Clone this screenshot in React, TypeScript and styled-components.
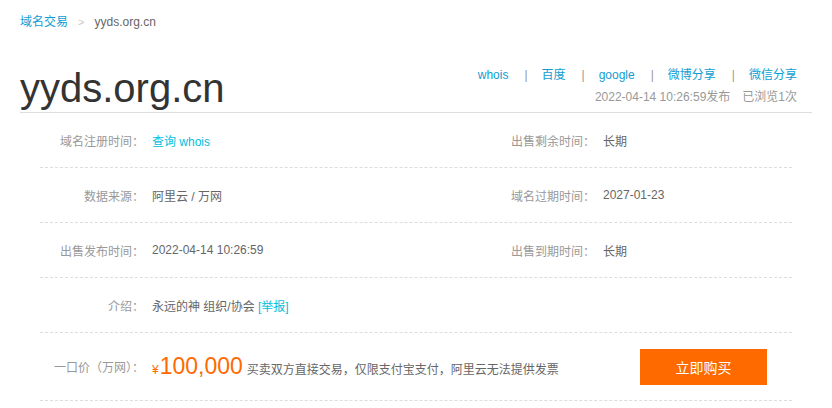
import React from "react";
import styled, { createGlobalStyle } from "styled-components";

const GlobalStyle = createGlobalStyle`
  body {
    margin: 0;
    background: #fff;
    font-family: "Liberation Sans", "Noto Sans CJK SC", sans-serif;
    font-size: 12px;
    color: #666;
  }
`;

const Page = styled.div`
  width: 792px;
  padding: 0 20px;
`;

const Breadcrumb = styled.div`
  display: flex;
  align-items: center;
  height: 16px;
  margin-top: 14px;
  gap: 8px;
  line-height: 16px;
`;

const CrumbLink = styled.a`
  color: #109dd2;
  text-decoration: none;
`;

const CrumbSep = styled.span`
  color: #c8c8c8;
  font-size: 11px;
  padding: 0 2px;
`;

const CrumbCurrent = styled.span`
  color: #666;
`;

const Header = styled.div`
  display: flex;
  justify-content: space-between;
  align-items: flex-end;
  height: 82px;
  border-bottom: 1px solid #ddd;
`;

const Title = styled.h1`
  margin: 0 0 1px;
  font-weight: normal;
  font-size: 40px;
  line-height: 46px;
  color: #333;
`;

const Meta = styled.div`
  display: flex;
  flex-direction: column;
  align-items: flex-end;
  margin-right: 15px;
  padding-bottom: 7px;
  gap: 6px;
`;

const Links = styled.div`
  display: flex;
  align-items: center;
  line-height: 16px;
`;

const ShareLink = styled.a`
  color: #109dd2;
  text-decoration: none;
`;

const Pipe = styled.span`
  color: #999;
  padding: 0 14px 0 16px;
`;

const Stamp = styled.div`
  display: flex;
  gap: 12px;
  color: #999;
  line-height: 16px;
`;

const Table = styled.div`
  margin: 0 20px;
`;

const Row = styled.div<{ $tall?: boolean }>`
  display: flex;
  align-items: center;
  height: ${(p) => (p.$tall ? 67 : 54)}px;
  border-bottom: 1px dashed #ddd;
`;

const Cell = styled.div<{ $w: number }>`
  display: flex;
  align-items: center;
  width: ${(p) => p.$w}px;
  flex-shrink: 0;
`;

const Label = styled.span`
  width: 104px;
  flex-shrink: 0;
  text-align: right;
  color: #999;
`;

const Value = styled.span`
  margin-left: 8px;
  color: #666;
`;

const Accent = styled.a`
  color: #00c1de;
  text-decoration: none;
`;

const PriceValue = styled.div`
  display: flex;
  align-items: baseline;
  margin-left: 8px;
  flex: 1;
`;

const Yen = styled.span`
  color: #ff6a00;
  font-size: 12px;
  margin-right: 1px;
`;

const Amount = styled.span`
  color: #ff6a00;
  font-size: 23px;
  margin-right: 4px;
`;

const Note = styled.span`
  color: #666;
`;

const BuyButton = styled.button`
  width: 127px;
  height: 36px;
  margin-right: 25px;
  border: 0;
  background: #ff6a00;
  color: #fff;
  font-family: inherit;
  font-size: 14px;
  cursor: pointer;
`;

export default function App() {
  return (
    <>
      <GlobalStyle />
      <Page>
        <Breadcrumb>
          <CrumbLink href="#">域名交易</CrumbLink>
          <CrumbSep>&gt;</CrumbSep>
          <CrumbCurrent>yyds.org.cn</CrumbCurrent>
        </Breadcrumb>

        <Header>
          <Title>yyds.org.cn</Title>
          <Meta>
            <Links>
              <ShareLink href="#">whois</ShareLink>
              <Pipe>|</Pipe>
              <ShareLink href="#">百度</ShareLink>
              <Pipe>|</Pipe>
              <ShareLink href="#">google</ShareLink>
              <Pipe>|</Pipe>
              <ShareLink href="#">微博分享</ShareLink>
              <Pipe>|</Pipe>
              <ShareLink href="#">微信分享</ShareLink>
            </Links>
            <Stamp>
              <span>2022-04-14 10:26:59发布</span>
              <span>已浏览1次</span>
            </Stamp>
          </Meta>
        </Header>

        <Table>
          <Row>
            <Cell $w={451}>
              <Label>域名注册时间：</Label>
              <Value>
                <Accent href="#">查询 whois</Accent>
              </Value>
            </Cell>
            <Cell $w={301}>
              <Label>出售剩余时间：</Label>
              <Value>长期</Value>
            </Cell>
          </Row>
          <Row>
            <Cell $w={451}>
              <Label>数据来源：</Label>
              <Value>阿里云 / 万网</Value>
            </Cell>
            <Cell $w={301}>
              <Label>域名过期时间：</Label>
              <Value>2027-01-23</Value>
            </Cell>
          </Row>
          <Row>
            <Cell $w={451}>
              <Label>出售发布时间：</Label>
              <Value>2022-04-14 10:26:59</Value>
            </Cell>
            <Cell $w={301}>
              <Label>出售到期时间：</Label>
              <Value>长期</Value>
            </Cell>
          </Row>
          <Row>
            <Cell $w={752}>
              <Label>介绍：</Label>
              <Value>
                永远的神 组织/协会 <Accent href="#">[举报]</Accent>
              </Value>
            </Cell>
          </Row>
          <Row $tall>
            <Label>一口价（万网）：</Label>
            <PriceValue>
              <Yen>¥</Yen>
              <Amount>100,000</Amount>
              <Note>买卖双方直接交易，仅限支付宝支付，阿里云无法提供发票</Note>
            </PriceValue>
            <BuyButton>立即购买</BuyButton>
          </Row>
        </Table>
      </Page>
    </>
  );
}
